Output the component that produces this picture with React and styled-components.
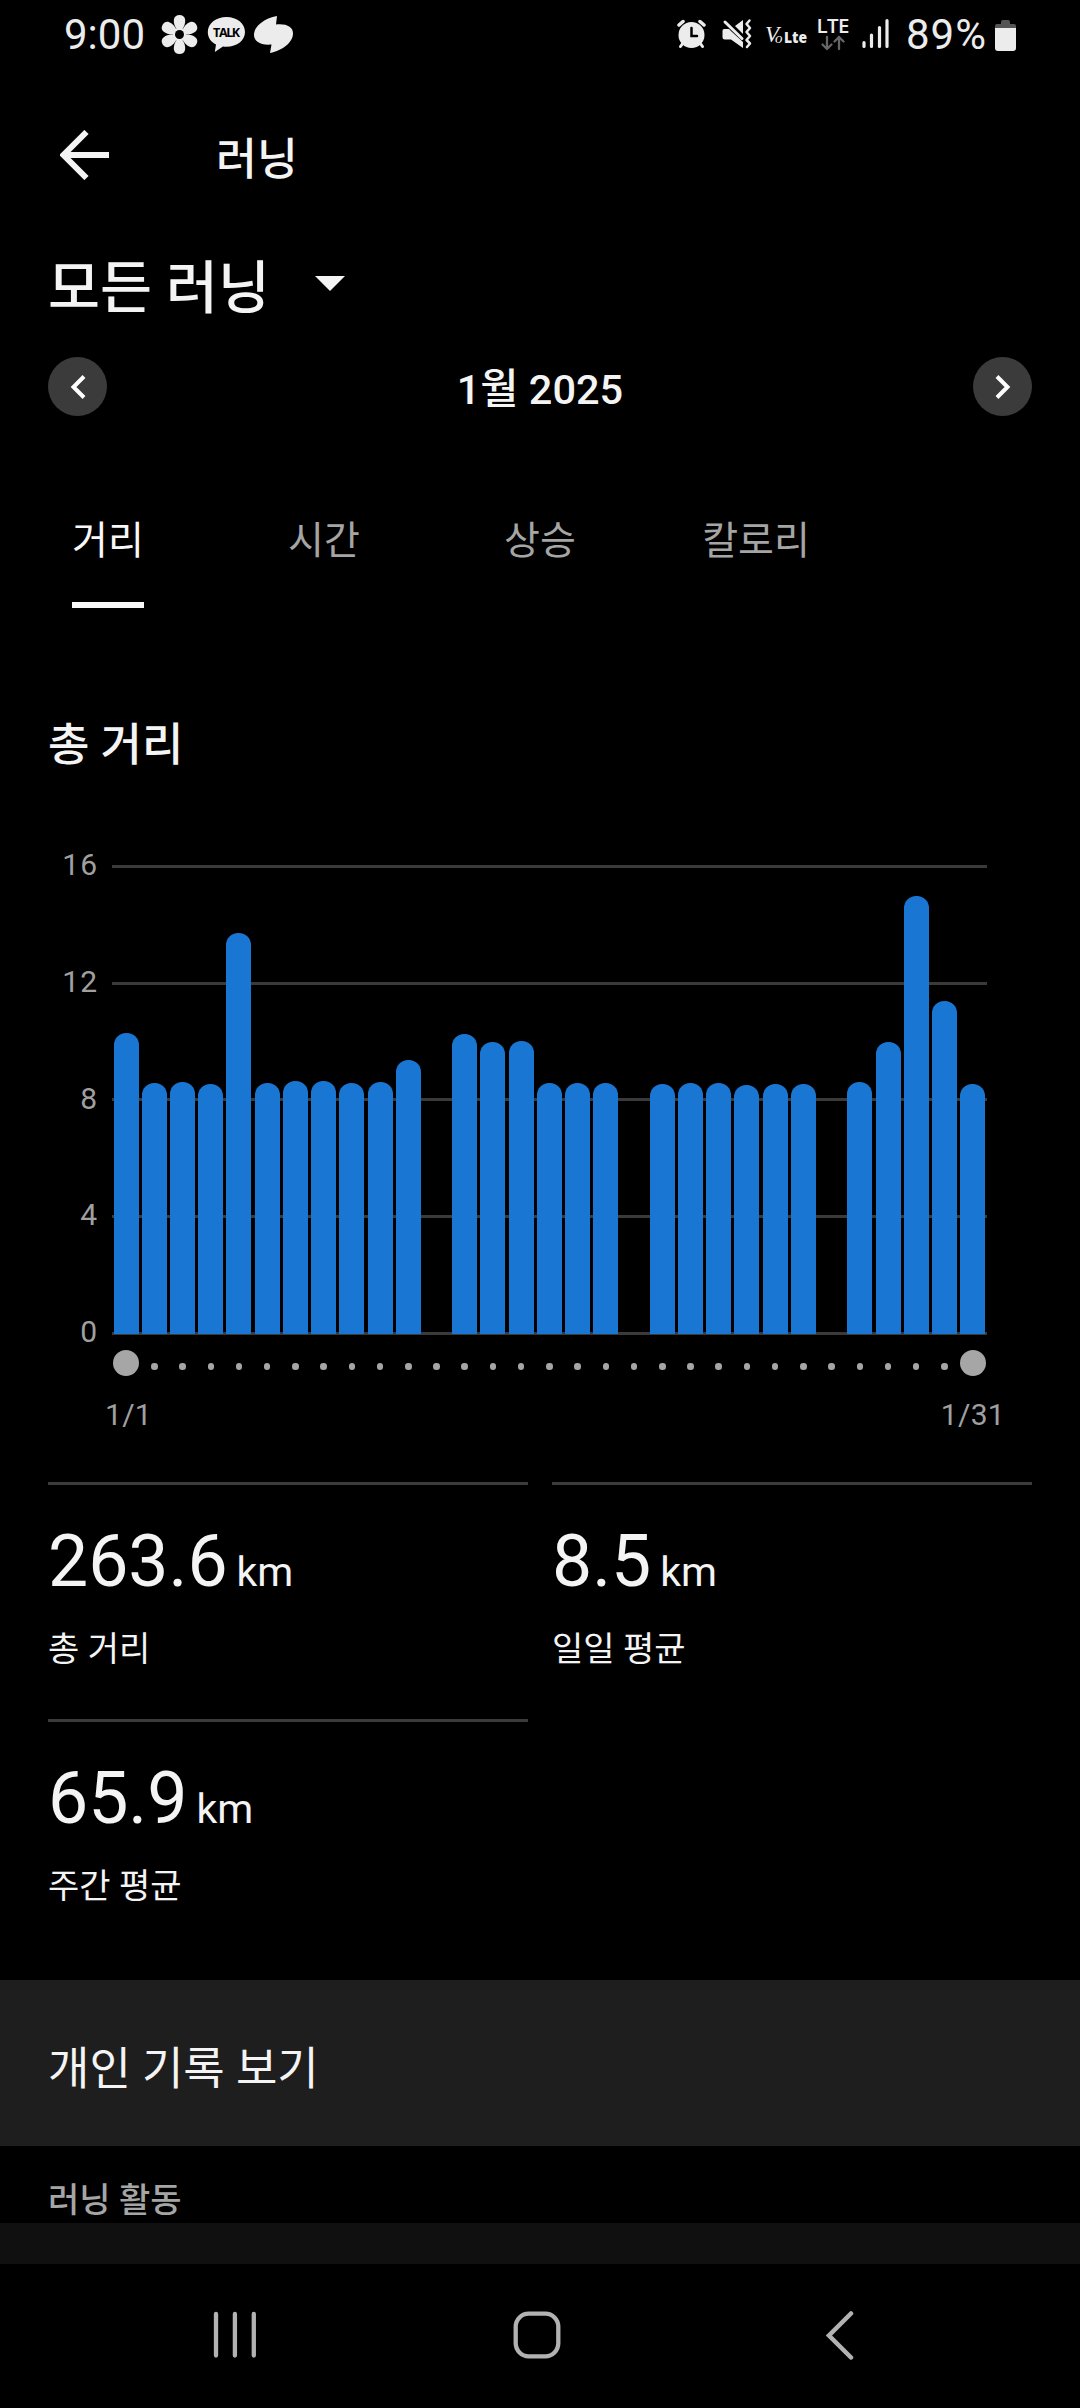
import styled, { createGlobalStyle } from "styled-components";

const GlobalStyle = createGlobalStyle`
  * {
    box-sizing: border-box;
  }
  body {
    margin: 0;
    background: #000;
    color: #f4f4f4;
    font-family: Roboto, "Noto Sans CJK KR", sans-serif;
  }
  button {
    border: 0;
    padding: 0;
    background: none;
    color: inherit;
    font: inherit;
  }
  h1, h2, p {
    margin: 0;
  }
  svg {
    display: block;
    flex-shrink: 0;
  }
`;

const Page = styled.div`
  display: flex;
  flex-direction: column;
  width: 1080px;
  height: 2408px;
  overflow: hidden;
`;

const StatusBar = styled.div`
  display: flex;
  justify-content: space-between;
  height: 70px;
  padding: 0 64px 0 64px;
  color: #ececec;
`;

const StatusGroup = styled.div`
  display: flex;
  align-items: center;
`;

const StatusText = styled.span`
  width: ${(props) => props.$width}px;
  font-size: 42px;
  line-height: 70px;
  letter-spacing: ${(props) => props.$spacing || 0}px;
  white-space: nowrap;
`;

const AppBar = styled.header`
  display: flex;
  align-items: center;
  height: 170px;
  padding-left: 60px;
`;

const AppTitle = styled.h1`
  margin-left: 106px;
  padding-top: 10px;
  font-size: 44.5px;
  font-weight: 500;
  line-height: 60px;
`;

const RunFilter = styled.button`
  display: flex;
  align-items: center;
  gap: 45px;
  height: 94px;
  padding-left: 48px;
  font-size: 56.5px;
  font-weight: 500;
  line-height: 80px;
  span {
    padding-top: 3px;
  }
  svg {
    margin-bottom: 7px;
  }
`;

const MonthNav = styled.div`
  display: flex;
  align-items: center;
  justify-content: space-between;
  height: 105px;
  padding: 0 48px;
`;

const RoundButton = styled.button`
  display: flex;
  align-items: center;
  justify-content: center;
  width: 59px;
  height: 59px;
  border-radius: 50%;
  background: #3b3b3b;
`;

const MonthLabel = styled.p`
  padding-top: 6px;
  font-size: 41.5px;
  font-weight: 500;
  line-height: 60px;
`;

const Tabs = styled.nav`
  display: flex;
  height: 169px;
`;

const Tab = styled.button`
  display: flex;
  justify-content: center;
  width: 216px;
  color: ${(props) => (props.$active ? "#f8f8f8" : "#a5a5a5")};
`;

const TabLabel = styled.span`
  height: 169px;
  padding-top: 72px;
  border-bottom: 6px solid ${(props) => (props.$active ? "#f8f8f8" : "transparent")};
  font-size: 39px;
  line-height: 60px;
`;

const SectionTitle = styled.h2`
  height: 257px;
  padding: 108px 48px 0;
  font-size: 45px;
  font-weight: 500;
  line-height: 60px;
`;

const Chart = styled.section`
  display: grid;
  grid-template-columns: 98px 875px;
  column-gap: 14px;
  height: 617px;
`;

const AxisLabels = styled.div`
  display: flex;
  flex-direction: column;
  justify-content: space-between;
  height: 507px;
  margin-top: -20px;
  color: #a0a0a0;
  font-size: 30px;
  line-height: 40px;
  letter-spacing: 1px;
  text-align: right;
`;

const Plot = styled.div`
  display: flex;
  align-items: flex-end;
  height: 470px;
  background: repeating-linear-gradient(
    to bottom,
    #3a3a3a 0,
    #3a3a3a 3px,
    transparent 3px,
    transparent 116.75px
  );
`;

const Day = styled.div`
  display: flex;
  flex: 1;
  align-items: flex-end;
  justify-content: center;
  height: 100%;
  padding-bottom: 1px;
`;

const Bar = styled.div`
  width: 25px;
  border-radius: 12px 12px 0 0;
  background: #1976d2;
`;

const DayDots = styled.div`
  display: flex;
  height: 26px;
  margin-top: 15px;
`;

const DotCell = styled.div`
  display: flex;
  flex: 1;
  justify-content: center;
`;

const Dot = styled.i`
  flex-shrink: 0;
  width: ${(props) => (props.$large ? 26 : 6.5)}px;
  height: ${(props) => (props.$large ? 26 : 6.5)}px;
  margin-top: ${(props) => (props.$large ? 0 : 13)}px;
  border-radius: 50%;
  background: #a6a6a6;
`;

const DateRange = styled.div`
  display: flex;
  justify-content: space-between;
  margin: 19px -18px 0 -7px;
  color: #a0a0a0;
  font-size: 30px;
  line-height: 40px;
  letter-spacing: 0.3px;
`;

const Stats = styled.section`
  display: grid;
  grid-template-columns: 480px 480px;
  grid-auto-rows: 237px;
  column-gap: 24px;
  height: 498px;
  padding-left: 48px;
`;

const Stat = styled.div`
  padding-top: 35px;
  border-top: 3px solid #3b3b3b;
`;

const StatValue = styled.p`
  display: flex;
  align-items: baseline;
  gap: 9px;
  font-size: 71.5px;
  line-height: 84px;
`;

const StatUnit = styled.span`
  font-size: 41px;
`;

const StatLabel = styled.p`
  margin-top: 11px;
  font-size: 34px;
  line-height: 48px;
`;

const RecordsLink = styled.button`
  height: 166px;
  padding: 14px 48px 0;
  background: #1e1e1e;
  font-size: 45px;
  line-height: 60px;
  text-align: left;
`;

const ActivitiesTitle = styled.h2`
  height: 77px;
  padding: 31px 48px 0;
  color: #a5a5a5;
  font-size: 34px;
  font-weight: 500;
  line-height: 46px;
`;

const ActivityCard = styled.div`
  height: 41px;
  background: #101010;
`;

const SystemNav = styled.nav`
  display: grid;
  grid-template-columns: 300px 313px 28px;
  padding: 47px 0 0 213px;
`;

const distances = [
  10.32, 8.6, 8.64, 8.57, 13.75, 8.6, 8.67, 8.67, 8.6, 8.64, 9.38, 0, 10.28,
  10, 10.03, 8.6, 8.6, 8.6, 0, 8.57, 8.6, 8.6, 8.53, 8.57, 8.57, 0, 8.64, 10,
  15, 11.41, 8.57,
];

const KM_HEIGHT = 29.19;

const tabs = ["거리", "시간", "상승", "칼로리"];

const stats = [
  { value: "263.6", label: "총 거리" },
  { value: "8.5", label: "일일 평균" },
  { value: "65.9", label: "주간 평균" },
];

function NotificationIcons() {
  return (
    <svg width="134" height="40" viewBox="160 16 134 40" fill="#ececec">
      {[0, 60, 120, 180, 240, 300].map((angle) => (
        <path
          key={angle}
          d="M178 32C174.500 28 173.500 24 173.900 20.500C174.300 17.500 176.500 16 179.500 16C182.500 16 184.700 17.500 185.100 20.500C185.500 24 184.500 28 181 32Z"
          transform={`rotate(${angle} 179.500 35.500)`}
        />
      ))}
      <circle cx="179.500" cy="35.500" r="6.500" />
      <circle cx="179.500" cy="35.500" r="4.500" fill="#000" />
      <path d="M226.500 18C216 18 207.800 24.500 207.800 33C207.800 38.500 211 43 216 45.500L214.800 53L223 47.600C236 49 245 42 245 33C245 24.500 237 18 226.500 18Z" />
      <text
        x="226.600"
        y="38"
        fill="#000"
        fontFamily="Open Sans"
        fontSize="12.500"
        fontWeight="700"
        textAnchor="middle"
        textLength="27"
      >
        TALK
      </text>
      <path d="M277 17C265 19 254 27 254 36C254 42 260 46.500 271.500 45.500L270 54C283 51.500 293 43 293 34.500C293 28 287 24.500 276 25.500Z" />
    </svg>
  );
}

function SystemIcons() {
  return (
    <svg width="229" height="60" viewBox="677 6 229 60" fill="none">
      <g stroke="#ececec" strokeLinecap="round">
        <circle cx="691.500" cy="36" r="13" fill="#ececec" stroke="none" />
        <path d="M679 26L683 22.500M704 26L700 22.500" strokeWidth="3.500" />
        <path d="M683 44L680.500 47.500M700 44L702.500 47.500" strokeWidth="3" />
        <path d="M691.500 29V37H697" stroke="#000" strokeWidth="2.500" />
      </g>
      <path
        d="M724 30H729L732 33L743 43V49L731 40.500H725Q722.500 40.500 722.500 38V32Q722.500 30 724 30ZM743 21V35L735 27Z"
        fill="#ececec"
      />
      <path d="M725 23L742 39.500" stroke="#ececec" strokeWidth="3" strokeLinecap="round" />
      <path
        d="M749.500 21.500L746.500 25L750 29L746.500 33L750 37L746.500 41L750 44.500L747 48"
        stroke="#ececec"
        strokeWidth="2.500"
        strokeLinecap="round"
        strokeLinejoin="round"
      />
      <text
        x="765"
        y="43"
        fill="#ececec"
        fontFamily="Liberation Serif"
        fontSize="23"
        fontStyle="italic"
      >
        V
      </text>
      <text
        x="775"
        y="43.500"
        fill="#ececec"
        fontFamily="Liberation Serif"
        fontSize="15"
        fontStyle="italic"
      >
        o
      </text>
      <text
        x="784"
        y="43.500"
        fill="#ececec"
        fontFamily="Open Sans"
        fontSize="16"
        fontWeight="800"
        textLength="23"
        lengthAdjust="spacingAndGlyphs"
      >
        Lte
      </text>
      <text
        x="816.500"
        y="34"
        fill="#ececec"
        fontFamily="Open Sans"
        fontSize="20.500"
        fontWeight="600"
        textLength="33"
      >
        LTE
      </text>
      <path
        d="M827 38V50M822.500 45.500L827 50L831.500 45.500M839 50V38M834.500 42.500L839 38L843.500 42.500"
        stroke="#666"
        strokeWidth="2.300"
        strokeLinecap="round"
        strokeLinejoin="round"
      />
      <path
        d="M864 43.500V47.500M871.500 36V47.500M879.500 28.500V47.500M887 21.500V47.500"
        stroke="#ececec"
        strokeWidth="3.200"
        strokeLinecap="round"
      />
    </svg>
  );
}

function BatteryIcon() {
  return (
    <svg width="21" height="31" viewBox="0 0 21 31">
      <path d="M0 8V6Q0 4 2 4H6V2Q6 0 8 0H13Q15 0 15 2V4H19Q21 4 21 6V8Z" fill="#555" />
      <path d="M0 8H21V28Q21 31 18 31H3Q0 31 0 28Z" fill="#ececec" />
    </svg>
  );
}

function Chevron({ d }) {
  return (
    <svg width="16" height="24" viewBox="0 0 16 24" fill="none">
      <path d={d} stroke="#fff" strokeWidth="4" />
    </svg>
  );
}

export default function App() {
  return (
    <>
      <GlobalStyle />
      <Page>
        <StatusBar>
          <StatusGroup>
            <StatusText $width={96}>9:00</StatusText>
            <NotificationIcons />
          </StatusGroup>
          <StatusGroup>
            <SystemIcons />
            <StatusText $width={89} $spacing={1}>
              89%
            </StatusText>
            <BatteryIcon />
          </StatusGroup>
        </StatusBar>

        <AppBar>
          <button aria-label="뒤로">
            <svg width="50" height="50" viewBox="0 0 50 50" fill="none">
              <path d="M26.500 2L3.500 25L26.500 48M4 25H49" stroke="#f4f4f4" strokeWidth="6" />
            </svg>
          </button>
          <AppTitle>러닝</AppTitle>
        </AppBar>

        <RunFilter>
          <span>모든 러닝</span>
          <svg width="30" height="15" viewBox="0 0 30 15">
            <path d="M0 0H30L15 15Z" fill="#f4f4f4" />
          </svg>
        </RunFilter>

        <MonthNav>
          <RoundButton aria-label="이전 달">
            <Chevron d="M14 1.500L3.500 12L14 22.500" />
          </RoundButton>
          <MonthLabel>1월 2025</MonthLabel>
          <RoundButton aria-label="다음 달">
            <Chevron d="M2 1.500L12.500 12L2 22.500" />
          </RoundButton>
        </MonthNav>

        <Tabs>
          {tabs.map((tab, i) => (
            <Tab key={tab} $active={i === 0}>
              <TabLabel $active={i === 0}>{tab}</TabLabel>
            </Tab>
          ))}
        </Tabs>

        <SectionTitle>총 거리</SectionTitle>

        <Chart>
          <AxisLabels>
            {[16, 12, 8, 4, 0].map((km) => (
              <span key={km}>{km}</span>
            ))}
          </AxisLabels>
          <div>
            <Plot>
              {distances.map((km, i) => (
                <Day key={i}>
                  <Bar style={{ height: km * KM_HEIGHT }} />
                </Day>
              ))}
            </Plot>
            <DayDots>
              {distances.map((_, i) => (
                <DotCell key={i}>
                  <Dot $large={i === 0 || i === distances.length - 1} />
                </DotCell>
              ))}
            </DayDots>
            <DateRange>
              <span>1/1</span>
              <span>1/31</span>
            </DateRange>
          </div>
        </Chart>

        <Stats>
          {stats.map((stat) => (
            <Stat key={stat.label}>
              <StatValue>
                {stat.value}
                <StatUnit>km</StatUnit>
              </StatValue>
              <StatLabel>{stat.label}</StatLabel>
            </Stat>
          ))}
        </Stats>

        <RecordsLink>개인 기록 보기</RecordsLink>
        <ActivitiesTitle>러닝 활동</ActivitiesTitle>
        <ActivityCard />

        <SystemNav>
          <svg width="44" height="48" viewBox="0 0 44 48">
            <path
              d="M3 3V44.500M21.900 3V44.500M40.800 3V44.500"
              stroke="#b2b2b2"
              strokeWidth="4.300"
              strokeLinecap="round"
            />
          </svg>
          <svg width="48" height="48" viewBox="0 0 48 48" fill="none">
            <rect x="2.700" y="2.700" width="42.600" height="42.600" rx="13" stroke="#b2b2b2" strokeWidth="4.300" />
          </svg>
          <svg width="28" height="50" viewBox="0 0 28 50" fill="none">
            <path
              d="M25 2.500L3 24.500L25 46.500"
              stroke="#b2b2b2"
              strokeWidth="4.500"
              strokeLinecap="round"
            />
          </svg>
        </SystemNav>
      </Page>
    </>
  );
}
